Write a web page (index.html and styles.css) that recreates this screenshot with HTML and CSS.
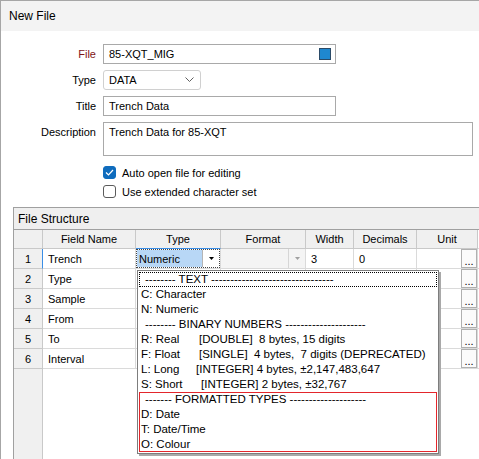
FILE: index.html
```html
<!DOCTYPE html>
<html lang="en">
<head>
    <meta charset="UTF-8">
    <title>New File</title>
    <link rel="stylesheet" href="styles.css">
</head>
<body>
    <div class="window">
        <div class="titlebar">New File</div>

        <div class="form">
            <div class="label label-req">File</div>
            <div class="field field-file"><span>85-XQT_MIG</span><span class="swatch"></span></div>

            <div class="label">Type</div>
            <div class="field select">
                <span>DATA</span>
                <svg width="9" height="6" viewBox="0 0 9 6"><polyline points="0.5,0.5 4.5,4.5 8.5,0.5" fill="none" stroke="#606060" stroke-width="1"/></svg>
            </div>

            <div class="label">Title</div>
            <div class="field field-title">Trench Data</div>

            <div class="label label-top">Description</div>
            <div class="field field-desc">Trench Data for 85-XQT</div>
        </div>

        <div class="checks">
            <div class="check">
                <span class="box box-on">
                    <svg width="9" height="7" viewBox="0 0 9 7"><polyline points="1,3.5 3.5,6 8,1" fill="none" stroke="#fff" stroke-width="1.2"/></svg>
                </span>
                Auto open file for editing
            </div>
            <div class="check">
                <span class="box"></span>
                Use extended character set
            </div>
        </div>

        <div class="group">
            <div class="group-head">File Structure</div>
            <div class="grid">
                <!-- header -->
                <div class="cell hcell"></div>
                <div class="cell hcell">Field Name</div>
                <div class="cell hcell hcell-active">Type</div>
                <div class="cell hcell">Format</div>
                <div class="cell hcell">Width</div>
                <div class="cell hcell">Decimals</div>
                <div class="cell hcell">Unit</div>
                <div class="cell hcell hcell-end"></div>

                <!-- row 1 -->
                <div class="cell num num-current">1</div>
                <div class="cell">Trench</div>
                <div class="cell cell-combo">
                    <div class="combo">
                        <span class="combo-value">Numeric</span>
                        <span class="combo-btn">
                            <svg width="5" height="3" viewBox="0 0 5 3"><polygon points="0,0 5,0 2.5,3" fill="#000"/></svg>
                        </span>
                    </div>
                    <div class="dropdown">
                        <div class="opt opt-head opt-focus">-------- TEXT --------------------------------</div>
                        <div class="opt">C: Character</div>
                        <div class="opt">N: Numeric</div>
                        <div class="opt opt-head">-------- BINARY NUMBERS ---------------------</div>
                        <div class="opt"><span class="code">R: Real</span>[DOUBLE]  8 bytes, 15 digits</div>
                        <div class="opt"><span class="code">F: Float</span>[SINGLE]  4 bytes,  7 digits (DEPRECATED)</div>
                        <div class="opt"><span class="code code-long">L: Long</span>[INTEGER] 4 bytes, ±2,147,483,647</div>
                        <div class="opt"><span class="code code-short">S: Short</span>[INTEGER] 2 bytes, ±32,767</div>
                        <div class="formatted">
                            <div class="opt opt-head">------- FORMATTED TYPES --------------------</div>
                            <div class="opt">D: Date</div>
                            <div class="opt">T: Date/Time</div>
                            <div class="opt">O: Colour</div>
                        </div>
                    </div>
                </div>
                <div class="cell cell-disabled">
                    <span class="combo-btn combo-btn-off">
                        <svg width="5" height="3" viewBox="0 0 5 3"><polygon points="0,0 5,0 2.5,3" fill="#a0a0a0"/></svg>
                    </span>
                </div>
                <div class="cell">3</div>
                <div class="cell">0</div>
                <div class="cell cell-unit"><span class="dots">...</span></div>
                <div class="cell cell-end"></div>

                <!-- row 2 -->
                <div class="cell num">2</div>
                <div class="cell">Type</div>
                <div class="cell"></div>
                <div class="cell"></div>
                <div class="cell"></div>
                <div class="cell"></div>
                <div class="cell cell-unit"><span class="dots">...</span></div>
                <div class="cell cell-end"></div>

                <!-- row 3 -->
                <div class="cell num">3</div>
                <div class="cell">Sample</div>
                <div class="cell"></div>
                <div class="cell"></div>
                <div class="cell"></div>
                <div class="cell"></div>
                <div class="cell cell-unit"><span class="dots">...</span></div>
                <div class="cell cell-end"></div>

                <!-- row 4 -->
                <div class="cell num">4</div>
                <div class="cell">From</div>
                <div class="cell"></div>
                <div class="cell"></div>
                <div class="cell"></div>
                <div class="cell"></div>
                <div class="cell cell-unit"><span class="dots">...</span></div>
                <div class="cell cell-end"></div>

                <!-- row 5 -->
                <div class="cell num">5</div>
                <div class="cell">To</div>
                <div class="cell"></div>
                <div class="cell"></div>
                <div class="cell"></div>
                <div class="cell"></div>
                <div class="cell cell-unit"><span class="dots">...</span></div>
                <div class="cell cell-end"></div>

                <!-- row 6 -->
                <div class="cell num">6</div>
                <div class="cell">Interval</div>
                <div class="cell"></div>
                <div class="cell"></div>
                <div class="cell"></div>
                <div class="cell"></div>
                <div class="cell cell-unit"><span class="dots">...</span></div>
                <div class="cell cell-end"></div>

                <!-- empty area below the rows -->
                <div class="filler-num"></div>
                <div class="filler"></div>
            </div>
        </div>
    </div>
</body>
</html>
```

FILE: styles.css
```css
html, body {
    margin: 0;
}

body {
    width: 479px;
    height: 459px;
    overflow: hidden;
    background-color: #ffffff;
    font-family: "Liberation Sans", Arial, sans-serif;
    font-size: 11px;
    color: #000000;
}

.window {
    height: 459px;
    box-sizing: border-box;
    border-left: 1px solid #a6a6a6;
    border-top: 1px solid #a6a6a6;
}

.titlebar {
    height: 30px;
    padding-left: 8px;
    display: flex;
    align-items: center;
    background-color: #f3f3f3;
    font-size: 12px;
}

/* form rows */
.form {
    display: grid;
    grid-template-columns: 95px 1fr;
    column-gap: 7px;
    row-gap: 6px;
    align-items: center;
    padding-top: 13px;
}

.label {
    text-align: right;
}

.label-req {
    color: #7f1416;
}

.label-top {
    align-self: start;
    line-height: 20px;
}

.field {
    height: 20px;
    box-sizing: border-box;
    border: 1px solid #a9a9a9;
    padding: 0 4px 0 5px;
    display: flex;
    align-items: center;
}

.field-file {
    width: 233px;
    justify-content: space-between;
}

.swatch {
    width: 12px;
    height: 12px;
    box-sizing: border-box;
    background-color: #1f88d0;
    border: 1px solid #2b4b68;
}

.select {
    width: 98px;
    border-color: #d0d0d0;
    border-radius: 3px;
    justify-content: space-between;
    padding-right: 6px;
}

.field-title {
    width: 233px;
}

.field-desc {
    width: 370px;
    height: 34px;
    align-items: flex-start;
    padding-top: 3px;
}

/* checkboxes */
.checks {
    padding-left: 102px;
    margin-top: 7px;
}

.check {
    height: 19px;
    display: flex;
    align-items: center;
    gap: 6px;
}

.box {
    width: 13px;
    height: 13px;
    box-sizing: border-box;
    border: 1px solid #5b5b5b;
    border-radius: 3px;
}

.box-on {
    display: flex;
    align-items: center;
    justify-content: center;
    background-color: #0f6cbd;
    border-color: #0f6cbd;
}

/* file structure grid */
.group {
    width: 480px;
    height: 260px;
    margin: 6px 0 0 12px;
    border-left: 1px solid #a0a0a0;
    border-top: 1px solid #a0a0a0;
}

.group-head {
    height: 22px;
    box-sizing: border-box;
    padding-left: 4px;
    display: flex;
    align-items: center;
    background-color: #efefef;
    border-bottom: 1px solid #a0a0a0;
    font-size: 12px;
}

.grid {
    display: grid;
    grid-template-columns: 29px 93px 85px 85px 48px 63px 61px 1fr;
}

.cell {
    height: 20px;
    box-sizing: border-box;
    padding-left: 5px;
    display: flex;
    align-items: center;
    border-right: 1px solid #dadada;
    border-bottom: 1px solid #dadada;
}

.hcell {
    height: 19px;
    padding: 0;
    justify-content: center;
    background-color: #f0f0f0;
    border-color: #c9c9c9;
}

.hcell-active {
    border-bottom-color: #3a8ee6;
}

.hcell-end {
    background-color: #ffffff;
    border-right: none;
    border-bottom-color: #dadada;
}

.num {
    padding: 0;
    justify-content: center;
    background-color: #f0f0f0;
    border-color: #c9c9c9;
}

.num-current {
    border-right-color: #3a8ee6;
}

.cell-end {
    border-right: none;
}

.cell-combo {
    position: relative;
    padding: 0;
}

.combo {
    width: 100%;
    height: 100%;
    box-sizing: border-box;
    display: flex;
    border: 1px dotted #444444;
}

.combo-value {
    flex: 1;
    display: flex;
    align-items: center;
    padding-left: 2px;
    background-color: #b8d7f6;
}

.combo-btn {
    width: 16px;
    display: flex;
    align-items: center;
    justify-content: center;
    background-color: #ffffff;
    border-left: 1px solid #b5b5b5;
}

.cell-disabled {
    padding: 0;
    justify-content: flex-end;
    align-items: stretch;
    background-color: #f4f4f4;
}

.combo-btn-off {
    border-left-color: #d6d6d6;
    background-color: #f4f4f4;
}

.cell-unit {
    padding: 0;
    justify-content: flex-end;
    align-items: stretch;
}

.dots {
    width: 16px;
    box-sizing: border-box;
    border: 1px solid #b0b0b0;
    background-color: #fbfbfb;
    text-align: center;
    line-height: 22px;
    font-size: 11px;
}

.filler-num {
    height: 100px;
    background-color: #f0f0f0;
    border-right: 1px solid #c9c9c9;
}

.filler {
    grid-column: 2 / -1;
}

/* type dropdown list */
.dropdown {
    position: absolute;
    left: 1px;
    top: 21px;
    z-index: 2;
    width: 302px;
    box-sizing: border-box;
    padding: 1px 0;
    background-color: #ffffff;
    border: 1px solid #7d7d7d;
    box-shadow: 2px 2px 0 #a9a9a9;
    font-size: 11.5px;
}

.opt {
    height: 15px;
    line-height: 15px;
    margin: 0 1px;
    padding-left: 2px;
    white-space: pre;
    overflow: hidden;
}

.opt-head {
    padding-left: 6px;
}

.opt-focus {
    outline: 1px dotted #000000;
    outline-offset: -1px;
}

.code {
    display: inline-block;
    width: 58px;
}

.code-long {
    width: 55px;
}

.code-short {
    width: 60px;
}

.formatted {
    outline: 1px solid #e3262c;
    outline-offset: -1px;
    margin: 0 1px;
}

.formatted .opt {
    margin: 0;
}
```
